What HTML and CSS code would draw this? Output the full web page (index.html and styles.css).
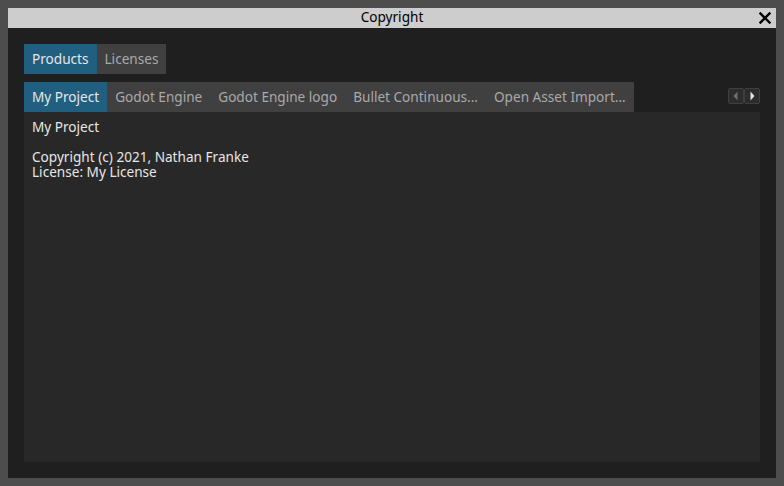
FILE: index.html
```html
<!DOCTYPE html>
<html>
<head>
<meta charset="utf-8">
<link rel="stylesheet" href="styles.css">
</head>
<body>
<div class="window">
  <div class="titlebar">
    <span class="title">Copyright</span>
    <svg class="close" width="12" height="12" viewBox="0 0 12 12"><path d="M1.5 1.5 L10.5 10.5 M10.5 1.5 L1.5 10.5" stroke="#000" stroke-width="2.4" stroke-linecap="square"/></svg>
  </div>
  <div class="content">
    <div class="tabs top">
      <div class="tab active">Products</div>
      <div class="tab">Licenses</div>
    </div>
    <div class="tabrow">
      <div class="tabs">
        <div class="tab active">My Project</div>
        <div class="tab">Godot Engine</div>
        <div class="tab">Godot Engine logo</div>
        <div class="tab">Bullet Continuous...</div>
        <div class="tab">Open Asset Import...</div>
      </div>
      <div class="arrows">
        <div class="arrow"><svg width="16" height="16" viewBox="0 0 16 16"><path d="M9.5 3.5 L5.5 8 L9.5 12.5 Z" fill="#6f6f6f"/></svg></div>
        <div class="arrow"><svg width="16" height="16" viewBox="0 0 16 16"><path d="M6.5 3.5 L10.5 8 L6.5 12.5 Z" fill="#e0e0e0"/></svg></div>
      </div>
    </div>
    <div class="panel">
      <div class="line">My Project</div>
      <div class="line">&nbsp;</div>
      <div class="line">Copyright (c) 2021, Nathan Franke</div>
      <div class="line">License: My License</div>
    </div>
  </div>
</div>
</body>
</html>
```
FILE: styles.css
```css
html, body {
  margin: 0;
  padding: 0;
  background: #4d4d4d;
  font-family: "Noto Sans", "DejaVu Sans", sans-serif;
  font-size: 13.6px;
}
body {
  padding: 8px;
  height: 486px;
  box-sizing: border-box;
}
.window {
  width: 768px;
  height: 470px;
  display: flex;
  flex-direction: column;
  background: #1f1f1f;
}
.titlebar {
  height: 20px;
  background: #cdcdcd;
  position: relative;
  display: flex;
  align-items: center;
  justify-content: center;
  color: #000;
  line-height: 20px;
}
.title {
  position: relative;
  top: -1px;
}
.close {
  position: absolute;
  right: 5px;
  top: 4px;
}
.content {
  flex: 1;
  display: flex;
  flex-direction: column;
  padding: 16px;
  gap: 8px;
}
.tabs {
  display: flex;
  height: 30px;
  background: #404040;
}
.tabs.top {
  align-self: flex-start;
}
.tabrow {
  display: flex;
  align-items: center;
  justify-content: space-between;
}
.tab {
  height: 30px;
  line-height: 29px;
  padding: 0 8px;
  color: #a9a9a9;
  white-space: nowrap;
}
.tab.active {
  background: #215f80;
  color: #e6e6e6;
}
.arrows {
  display: flex;
  margin-top: -2px;
}
.arrow {
  width: 16px;
  height: 16px;
  box-sizing: border-box;
  background: #2c2c2c;
  border: 1px solid #3f3f3f;
  border-radius: 2px;
  display: flex;
}
.arrow svg {
  margin: -1px;
}
.panel {
  flex: 1;
  margin-top: -8px;
  background: #282828;
  padding: 7px 8px 6px;
  color: #e6e6e6;
  line-height: 15px;
}
```
